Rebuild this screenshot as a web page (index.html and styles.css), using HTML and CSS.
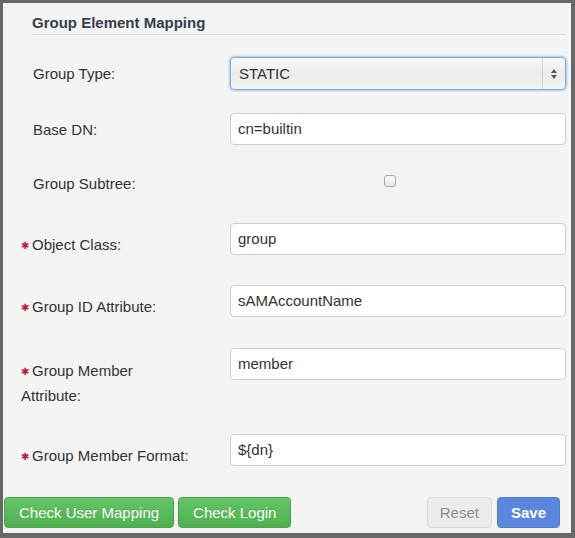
FILE: index.html
```html
<!DOCTYPE html>
<html>
<head>
<meta charset="utf-8">
<link rel="stylesheet" href="styles.css">
</head>
<body>
<div class="frame">
  <div class="header"><h2 class="title">Group Element Mapping</h2></div>
  <div class="form">
    <label class="lbl">Group Type:</label>
    <div class="field">
      <div class="select">
        <span class="select-text">STATIC</span>
        <span class="select-arrows"><span class="up"></span><span class="down"></span></span>
      </div>
    </div>

    <label class="lbl">Base DN:</label>
    <div class="field"><div class="input">cn=builtin</div></div>

    <label class="lbl lbl-flat">Group Subtree:</label>
    <div class="field"><span class="checkbox"></span></div>

    <label class="lbl req"><span class="star">✱</span>Object Class:</label>
    <div class="field"><div class="input">group</div></div>

    <label class="lbl req"><span class="star">✱</span>Group ID Attribute:</label>
    <div class="field"><div class="input">sAMAccountName</div></div>

    <label class="lbl req req-wrap"><span class="star">✱</span>Group Member Attribute:</label>
    <div class="field"><div class="input">member</div></div>

    <label class="lbl req"><span class="star">✱</span>Group Member Format:</label>
    <div class="field"><div class="input">${dn}</div></div>
  </div>
  <div class="actions">
    <div class="left-actions">
      <button class="btn btn-green">Check User Mapping</button>
      <button class="btn btn-green">Check Login</button>
    </div>
    <div class="right-actions">
      <button class="btn btn-reset">Reset</button>
      <button class="btn btn-save">Save</button>
    </div>
  </div>
</div>
</body>
</html>
```
FILE: styles.css
```css
html, body {
  margin: 0;
  padding: 0;
}
body {
  font-family: "Liberation Sans", Arial, sans-serif;
  color: #333;
}
.frame {
  box-sizing: border-box;
  width: 575px;
  height: 538px;
  border-style: solid;
  border-color: #686868;
  border-width: 3px 4px 5px 3px;
  background: #f4f4f4;
  padding-top: 10px;
}
.header {
  margin: 0 5px 0 29px;
  border-bottom: 1px solid #dcdcdc;
  padding-bottom: 1px;
}
.title {
  margin: 0;
  font-size: 15px;
  line-height: 20px;
  font-weight: bold;
  color: #34404b;
}
.form {
  margin-top: 22px;
  padding-left: 18px;
  display: grid;
  grid-template-columns: 209px 336px;
  grid-template-rows: 56px 58px 52px 62px 63px 86px 63px;
}
.lbl {
  font-size: 15px;
  line-height: 25px;
  padding-left: 12px;
  padding-top: 4px;
  padding-right: 36px;
  color: #333;
}
.lbl-flat {
  padding-top: 0;
}
.req {
  padding-left: 0;
  padding-top: 8.5px;
}
.req-wrap {
  padding-top: 9.5px;
}
.star {
  display: inline-block;
  width: 11px;
  line-height: 1;
  font-family: "DejaVu Sans", sans-serif;
  font-size: 10px;
  color: #c2183d;
  vertical-align: 1px;
}
.field {
  align-self: start;
}
.input {
  box-sizing: border-box;
  height: 32px;
  border: 1px solid #cfcfcf;
  border-radius: 4px;
  background: #fff;
  padding: 0 7px;
  font-size: 15px;
  line-height: 30px;
  color: #333;
}
.select {
  box-sizing: border-box;
  height: 33px;
  border: 1px solid #7fb0e2;
  border-radius: 4px;
  background: linear-gradient(#fafafa, #ececec 50%, #f3f3f3);
  box-shadow: 0 0 2px 1px rgba(102, 160, 225, 0.55);
  display: flex;
  align-items: center;
  font-size: 15px;
  color: #333;
}
.select-text {
  flex: 1;
  padding-left: 8px;
}
.select-arrows {
  width: 22px;
  height: 31px;
  border-left: 1px solid #d2d2d2;
  display: flex;
  flex-direction: column;
  align-items: center;
  justify-content: center;
  gap: 2px;
}
.up, .down {
  width: 0;
  height: 0;
  border-left: 3.5px solid transparent;
  border-right: 3.5px solid transparent;
}
.up { border-bottom: 4px solid #555; }
.down { border-top: 4px solid #555; }
.checkbox {
  display: block;
  box-sizing: border-box;
  width: 12px;
  height: 12px;
  margin: 4px 0 0 154px;
  border: 1px solid #a9a9a9;
  border-radius: 3px;
  background: linear-gradient(#fdfdfd, #e6e6e6);
}
.actions {
  display: flex;
  justify-content: space-between;
  padding: 0 11px 0 1px;
}
.left-actions, .right-actions {
  display: flex;
}
.left-actions { gap: 4px; }
.right-actions { gap: 5px; }
.btn {
  box-sizing: border-box;
  height: 31px;
  border-radius: 4px;
  font-family: "Liberation Sans", Arial, sans-serif;
  font-size: 15px;
  padding: 0 14px;
  border: 1px solid transparent;
  cursor: pointer;
}
.btn-green {
  color: #fff;
  background: linear-gradient(#63c563, #50b050);
  border-color: #47a547;
  text-shadow: 0 -1px 0 rgba(0, 0, 0, 0.15);
}
.btn-reset {
  color: #8e8e8e;
  background: #ececec;
  border-color: #dadada;
  padding: 0 12px;
}
.btn-save {
  color: #fff;
  background: #5a86dc;
  border-color: #4f7bd2;
  font-weight: bold;
  padding: 0 13px;
}
```
